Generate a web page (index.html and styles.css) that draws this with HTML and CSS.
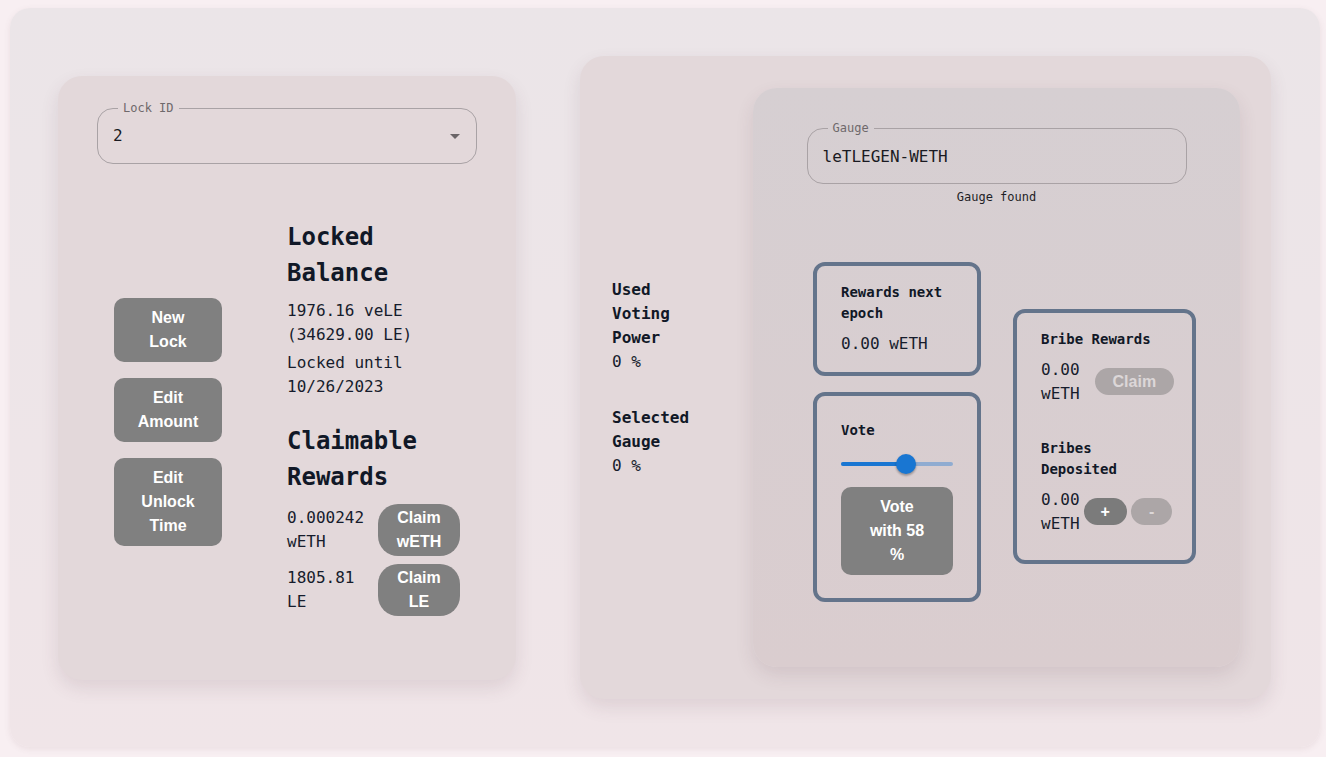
FILE: index.html
```html
<!DOCTYPE html>
<html>
<head>
<meta charset="utf-8">
<link rel="stylesheet" href="styles.css">
</head>
<body>
<div class="app">
  <div class="lock-card">
    <div class="field select-field">
      <span class="field-label">Lock ID</span>
      <span class="field-value">2</span>
      <svg class="arrow" width="10" height="5" viewBox="0 0 10 5"><path d="M0 0 L10 0 L5 5 Z" fill="#6b6567"/></svg>
    </div>
    <div class="lock-row">
      <div class="lock-actions">
        <button class="btn btn-block">New Lock</button>
        <button class="btn btn-block">Edit Amount</button>
        <button class="btn btn-block">Edit Unlock Time</button>
      </div>
      <div class="lock-info">
        <h2 class="heading">Locked Balance</h2>
        <p class="text balance">1976.16 veLE (34629.00 LE)</p>
        <p class="text until">Locked until 10/26/2023</p>
        <h2 class="heading claim-heading">Claimable Rewards</h2>
        <div class="claim-row">
          <span class="text">0.000242 wETH</span>
          <button class="btn btn-pill">Claim wETH</button>
        </div>
        <div class="claim-row second">
          <span class="text">1805.81 LE</span>
          <button class="btn btn-pill">Claim LE</button>
        </div>
      </div>
    </div>
  </div>

  <div class="vote-card">
    <div class="stats">
      <div class="stat-label">Used Voting Power</div>
      <div class="text">0 %</div>
      <div class="stat-label stat-gap">Selected Gauge</div>
      <div class="text">0 %</div>
    </div>
    <div class="gauge-card">
      <div class="field gauge-field">
        <span class="field-label">Gauge</span>
        <span class="field-value">leTLEGEN-WETH</span>
      </div>
      <div class="helper">Gauge found</div>
      <div class="boxes">
        <div class="box-col">
          <div class="box box-rewards">
            <div class="box-title">Rewards next epoch</div>
            <div class="text box-value">0.00 wETH</div>
          </div>
          <div class="box box-vote">
            <div class="box-title">Vote</div>
            <div class="slider">
              <div class="track"></div>
              <div class="track-fill" style="width: 58%"></div>
              <div class="thumb" style="left: 58%"></div>
            </div>
            <button class="btn vote-btn">Vote with 58 %</button>
          </div>
        </div>
        <div class="box box-bribe">
          <div class="box-title">Bribe Rewards</div>
          <div class="bribe-row">
            <span class="text">0.00 wETH</span>
            <button class="btn btn-small disabled claim-small">Claim</button>
          </div>
          <div class="box-title bribe-dep">Bribes Deposited</div>
          <div class="bribe-row tight">
            <span class="text">0.00 wETH</span>
            <button class="btn btn-small">+</button>
            <button class="btn btn-small disabled minus">-</button>
          </div>
        </div>
      </div>
    </div>
  </div>
</div>
</body>
</html>
```

FILE: styles.css
```css
* { box-sizing: border-box; }
html, body { margin: 0; padding: 0; }
body {
  background: #f8eff2;
  font-family: "DejaVu Sans Mono", monospace;
  color: #141a2c;
  width: 1326px;
  height: 757px;
  overflow: hidden;
}
.app {
  margin: 8px 6px 0 10px;
  width: 1310px;
  height: 739px;
  padding: 48px 49px 48px 48px;
  border-radius: 20px;
  background: linear-gradient(180deg, #ebe5e8 0%, #f0e5e8 100%);
  box-shadow: 0 2px 6px rgba(120, 80, 90, 0.10);
  display: flex;
  align-items: center;
  gap: 64px;
}

/* left card */
.lock-card {
  width: 458px;
  flex: none;
  background: #e3d8da;
  border-radius: 24px;
  padding: 32px 39px 55px 39px;
  box-shadow: 0 8px 18px rgba(90, 60, 70, 0.12);
}
.field {
  position: relative;
  height: 56px;
  border: 1px solid #a9a2a5;
  border-radius: 16px;
  display: flex;
  align-items: center;
  padding: 0 15px;
}
.field-label {
  position: absolute;
  top: -9px;
  left: 20px;
  padding: 0 5px;
  font-size: 12px;
  line-height: 16px;
  color: #6f696b;
  background: #e3d8da;
}
.field-value {
  font-size: 16px;
  color: #1a1a22;
}
.arrow {
  position: absolute;
  right: 16px;
  top: 25px;
}
.select-field { width: 380px; }

.lock-row {
  margin-top: 55px;
  display: flex;
  align-items: center;
  padding: 0 17px;
  gap: 65px;
}
.lock-actions {
  display: flex;
  flex-direction: column;
  gap: 16px;
  width: 108px;
}
.btn {
  font-family: "Liberation Sans", Arial, sans-serif;
  font-weight: bold;
  font-size: 16px;
  line-height: 24px;
  color: #ffffff;
  background: #808080;
  border: none;
  margin: 0;
  cursor: pointer;
}
.btn-block {
  width: 108px;
  padding: 8px 20px;
  border-radius: 10px;
}
.lock-info {
  width: 173px;
  padding-bottom: 9px;
}
.heading {
  margin: 0;
  font-size: 24px;
  line-height: 36px;
  font-weight: bold;
  color: #111827;
}
.text {
  font-size: 16px;
  line-height: 24px;
  color: #161c2c;
  margin: 0;
}
.balance { margin-top: 8px; }
.until { margin-top: 4px; }
.claim-heading { margin-top: 24px; }
.claim-row {
  margin-top: 9px;
  display: flex;
  justify-content: space-between;
  align-items: center;
  gap: 8px;
}
.claim-row .text { flex: 0 1 auto; min-width: 0; }
.claim-row.second { margin-top: 8px; }
.btn-pill {
  flex: none;
  width: 82px;
  padding: 2px 18px;
  border-radius: 20px;
}

/* right card */
.vote-card {
  width: 691px;
  flex: none;
  background: #e3d8da;
  border-radius: 24px;
  padding: 32px 31px 32px 32px;
  display: flex;
  align-items: center;
  box-shadow: 0 8px 18px rgba(90, 60, 70, 0.12);
}
.stats {
  width: 100px;
  margin-right: 41px;
  flex: none;
}
.stat-label {
  font-size: 16px;
  line-height: 24px;
  font-weight: bold;
  color: #111827;
}
.stat-gap { margin-top: 32px; }

.gauge-card {
  width: 487px;
  flex: none;
  border-radius: 24px;
  background: linear-gradient(180deg, #d6cfd2 0%, #dacdcf 100%);
  padding: 40px 0 65px 0;
  display: flex;
  flex-direction: column;
  align-items: center;
  box-shadow: 0 8px 18px rgba(90, 60, 70, 0.12);
}
.gauge-field { width: 380px; }
.gauge-field .field-label { background: #d6cfd2; }
.helper {
  margin-top: 3px;
  font-size: 12px;
  line-height: 20px;
  color: #1e1e26;
}
.boxes {
  margin-top: 55px;
  display: flex;
  align-items: center;
  gap: 32px;
  padding-left: 16px;
}
.box-col {
  display: flex;
  flex-direction: column;
  gap: 16px;
}
.box {
  border: 4px solid #64748b;
  border-radius: 12px;
}
.box-title {
  font-size: 14px;
  line-height: 21px;
  font-weight: bold;
  color: #111827;
}
.box-rewards {
  width: 168px;
  padding: 16px 24px;
}
.box-value { margin-top: 8px; }
.box-vote {
  width: 168px;
  padding: 24px 24px 23px 24px;
}
.slider {
  position: relative;
  height: 30px;
  margin: 8px 0;
}
.track {
  position: absolute;
  left: 0;
  right: 0;
  top: 13px;
  height: 4px;
  border-radius: 2px;
  background: #1976d2;
  opacity: 0.38;
}
.track-fill {
  position: absolute;
  left: 0;
  top: 13px;
  height: 4px;
  border-radius: 2px;
  background: #1976d2;
}
.thumb {
  position: absolute;
  top: 5px;
  width: 20px;
  height: 20px;
  margin-left: -10px;
  border-radius: 50%;
  background: #1976d2;
  box-shadow: 0 2px 2px rgba(0, 0, 0, 0.2), 0 1px 3px rgba(0, 0, 0, 0.15);
}
.vote-btn {
  width: 112px;
  padding: 8px 24px;
  border-radius: 10px;
}
.box-bribe {
  width: 183px;
  padding: 16px 24px 24px 24px;
  margin-top: 8px;
}
.bribe-row {
  margin-top: 8px;
  display: flex;
  align-items: center;
  gap: 15px;
  width: 127px;
}
.bribe-row .text { flex: 0 1 auto; width: 39px; }
.bribe-row .btn { flex: none; }
.bribe-row.tight { gap: 4px; }
.bribe-dep { margin-top: 32px; }
.btn-small {
  padding: 4px 17px;
  line-height: 19px;
  border-radius: 14px;
  background: #7b7b7b;
}
.claim-small { padding: 4px 18px; }
.btn-small.minus { padding: 4px 18px; }
.btn-small.disabled {
  background: #aca6a7;
  color: #dcd7d8;
}
```
